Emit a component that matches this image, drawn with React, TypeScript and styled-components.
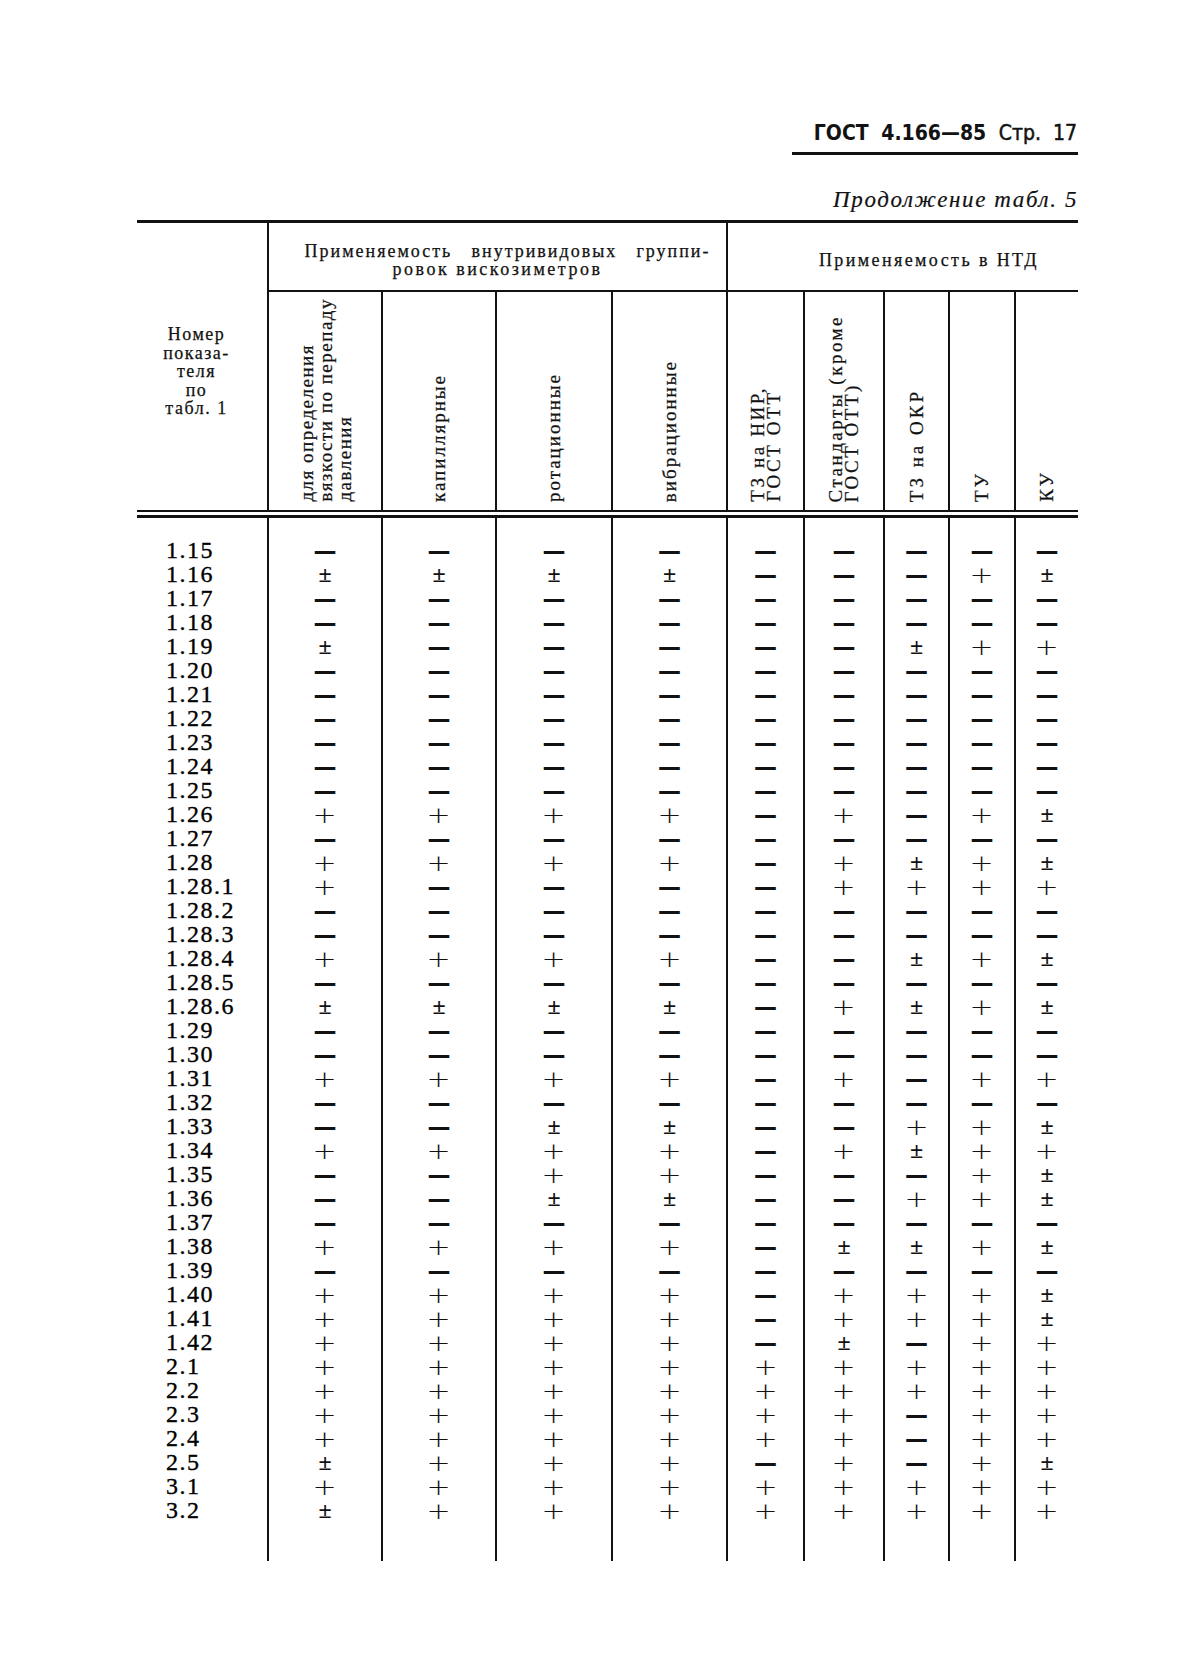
import React from 'react';
import styled, { createGlobalStyle, css } from 'styled-components';

const INK = '#121212';
const COLS = '130px 114px 114px 116px 115px 77px 80px 65px 66px 64px';
const SERIF = '"Liberation Serif", "DejaVu Serif", serif';

const GlobalStyle = createGlobalStyle`
  html, body { margin: 0; padding: 0; background: #ffffff; }
  body { font-family: ${SERIF}; color: ${INK}; }
  * { box-sizing: border-box; }
`;

const Page = styled.div`
  width: 1185px;
  min-height: 1674px;
  padding: 121px 107px 0 137px;
`;

const TopMatter = styled.header`
  display: flex;
  flex-direction: column;
  align-items: flex-end;
`;

const RunningHead = styled.div`
  font-family: "DejaVu Sans Condensed", "DejaVu Sans", sans-serif;
  font-stretch: condensed;
  font-weight: 700;
  font-size: 21px;
  line-height: 24px;
  word-spacing: 6px;
  padding: 0 1px 7px 22px;
  border-bottom: 3px solid ${INK};
`;

const PageNo = styled.span`
  font-weight: 400;
  -webkit-text-stroke: 0.5px ${INK};
`;

const Caption = styled.div`
  margin-top: 33px;
  font-style: italic;
  font-size: 23px;
  line-height: 24px;
  letter-spacing: 1.6px;
  -webkit-text-stroke: 0.2px ${INK};
`;

const Table = styled.section`
  margin-top: 8px;
  width: 941px;
  border-top: 3px solid ${INK};
`;

const HeadGrid = styled.div`
  display: grid;
  grid-template-columns: ${COLS};
  grid-template-rows: 69px 218px;
`;

const StubHead = styled.div`
  grid-row: 1 / 3;
  grid-column: 1;
  display: flex;
  flex-direction: column;
  align-items: center;
  justify-content: center;
  padding: 10px 11px 0 0;
  font-size: 18px;
  line-height: 18.5px;
  letter-spacing: 1.5px;
  text-align: center;
  -webkit-text-stroke: 0.25px ${INK};
`;

const GroupHead = styled.div<{ $from: number; $to: number; $padLeft: number; $ls: number }>`
  grid-row: 1;
  grid-column: ${(p) => p.$from} / ${(p) => p.$to};
  border-left: 2px solid ${INK};
  border-bottom: 2px solid ${INK};
  display: flex;
  flex-direction: column;
  align-items: center;
  justify-content: center;
  padding-top: 6px;
  padding-left: ${(p) => p.$padLeft}px;
  font-size: 18px;
  line-height: 18px;
  letter-spacing: ${(p) => p.$ls}px;
  -webkit-text-stroke: 0.25px ${INK};
`;

const JustifiedLine = styled.div`
  width: 406px;
  margin-left: 20px;
  text-align: justify;
  text-align-last: justify;
`;

const CenteredLine = styled.div<{ $ls?: number }>`
  text-align: center;
  ${(p) => (p.$ls !== undefined ? `letter-spacing: ${p.$ls}px;` : '')}
`;

const SubHead = styled.div<{ $col: number }>`
  grid-row: 2;
  grid-column: ${(p) => p.$col};
  border-left: 2px solid ${INK};
  display: flex;
  justify-content: center;
  align-items: flex-end;
  padding-bottom: 8px;
`;

const VerticalLabel = styled.div<{ $ls: number; $lh: number }>`
  writing-mode: vertical-rl;
  transform: rotate(180deg);
  white-space: nowrap;
  font-size: 19px;
  line-height: ${(p) => p.$lh}px;
  letter-spacing: ${(p) => p.$ls}px;
  -webkit-text-stroke: 0.25px ${INK};
`;

const DoubleRule = styled.div`
  height: 8px;
  border-top: 2px solid ${INK};
  border-bottom: 3px solid ${INK};
`;

const Row = styled.div<{ $height: number }>`
  display: grid;
  grid-template-columns: ${COLS};
  height: ${(p) => p.$height}px;
`;

const LabelCell = styled.div`
  padding-left: 29px;
  font-size: 24px;
  line-height: 24px;
  letter-spacing: 1.5px;
  white-space: nowrap;
  color: #000;
  -webkit-text-stroke: 0.35px #000;
`;

const MarkCell = styled.div`
  border-left: 2px solid ${INK};
  display: flex;
  justify-content: center;
  align-items: flex-start;
  overflow: visible;
`;

type Kind = '-' | '+' | 'p';

const markStyles: Record<Kind, ReturnType<typeof css>> = {
  '-': css`
    font-family: "DejaVu Sans", sans-serif;
    font-weight: 700;
    font-size: 23px;
    transform: translateY(1px);
  `,
  '+': css`
    font-family: "DejaVu Sans", sans-serif;
    font-weight: 200;
    font-size: 23px;
    transform: translateY(1px) scaleX(1.25);
  `,
  p: css`
    font-family: ${SERIF};
    font-weight: 700;
    font-size: 24px;
    transform: translateY(0px);
  `,
};

const Mark = styled.span<{ $kind: Kind }>`
  display: block;
  height: 24px;
  line-height: 24px;
  ${(p) => markStyles[p.$kind]}
`;

const glyph: Record<Kind, string> = { '-': '—', '+': '+', p: '±' };

const rows: [string, string][] = [
  ['1.15', '---------'],
  ['1.16', 'pppp---+p'],
  ['1.17', '---------'],
  ['1.18', '---------'],
  ['1.19', 'p-----p++'],
  ['1.20', '---------'],
  ['1.21', '---------'],
  ['1.22', '---------'],
  ['1.23', '---------'],
  ['1.24', '---------'],
  ['1.25', '---------'],
  ['1.26', '++++-+-+p'],
  ['1.27', '---------'],
  ['1.28', '++++-+p+p'],
  ['1.28.1', '+----++++'],
  ['1.28.2', '---------'],
  ['1.28.3', '---------'],
  ['1.28.4', '++++--p+p'],
  ['1.28.5', '---------'],
  ['1.28.6', 'pppp-+p+p'],
  ['1.29', '---------'],
  ['1.30', '---------'],
  ['1.31', '++++-+-++'],
  ['1.32', '---------'],
  ['1.33', '--pp--++p'],
  ['1.34', '++++-+p++'],
  ['1.35', '--++---+p'],
  ['1.36', '--pp--++p'],
  ['1.37', '---------'],
  ['1.38', '++++-pp+p'],
  ['1.39', '---------'],
  ['1.40', '++++-+++p'],
  ['1.41', '++++-+++p'],
  ['1.42', '++++-p-++'],
  ['2.1', '+++++++++'],
  ['2.2', '+++++++++'],
  ['2.3', '++++++-++'],
  ['2.4', '++++++-++'],
  ['2.5', 'p+++-+-+p'],
  ['3.1', '+++++++++'],
  ['3.2', 'p++++++++'],
];

const subHeads: { content: React.ReactNode; ls: number; lh: number }[] = [
  { content: <>для определения<br />вязкости по перепаду<br />давления</>, ls: 1.5, lh: 19 },
  { content: <>капиллярные</>, ls: 2, lh: 16 },
  { content: <>ротационные</>, ls: 2, lh: 16 },
  { content: <>вибрационные</>, ls: 2, lh: 16 },
  { content: <>ТЗ на НИР,<br />ГОСТ ОТТ</>, ls: 2.6, lh: 15.5 },
  { content: <>Стандарты (кроме<br />ГОСТ ОТТ)</>, ls: 2.5, lh: 16 },
  { content: <>ТЗ на ОКР</>, ls: 3, lh: 16 },
  { content: <>ТУ</>, ls: 3, lh: 16 },
  { content: <>КУ</>, ls: 3, lh: 16 },
];

const EmptyRow: React.FC<{ height: number }> = ({ height }) => (
  <Row $height={height}>
    <LabelCell />
    {Array.from({ length: 9 }).map((_, i) => (
      <MarkCell key={i} />
    ))}
  </Row>
);

export default function App() {
  return (
    <>
      <GlobalStyle />
      <Page>
        <TopMatter>
          <RunningHead>
            ГОСТ 4.166—85 <PageNo>Стр. 17</PageNo>
          </RunningHead>
          <Caption>Продолжение табл. 5</Caption>
        </TopMatter>
        <Table>
          <HeadGrid>
            <StubHead>
              <div>Номер</div>
              <div>показа-</div>
              <div>теля</div>
              <div>по</div>
              <div>табл. 1</div>
            </StubHead>
            <GroupHead $from={2} $to={6} $padLeft={0} $ls={2}>
              <JustifiedLine>Применяемость внутривидовых группи-</JustifiedLine>
              <CenteredLine $ls={2.5}>ровок вискозиметров</CenteredLine>
            </GroupHead>
            <GroupHead $from={6} $to={11} $padLeft={52} $ls={2.4}>
              <CenteredLine>Применяемость в НТД</CenteredLine>
            </GroupHead>
            {subHeads.map((h, i) => (
              <SubHead key={i} $col={i + 2}>
                <VerticalLabel $ls={h.ls} $lh={h.lh}>{h.content}</VerticalLabel>
              </SubHead>
            ))}
          </HeadGrid>
          <DoubleRule />
          <EmptyRow height={20} />
          {rows.map(([label, marks]) => (
            <Row key={label} $height={24}>
              <LabelCell>{label}</LabelCell>
              {marks.split('').map((m, i) => (
                <MarkCell key={i}>
                  <Mark $kind={m as Kind}>{glyph[m as Kind]}</Mark>
                </MarkCell>
              ))}
            </Row>
          ))}
          <EmptyRow height={39} />
        </Table>
      </Page>
    </>
  );
}
